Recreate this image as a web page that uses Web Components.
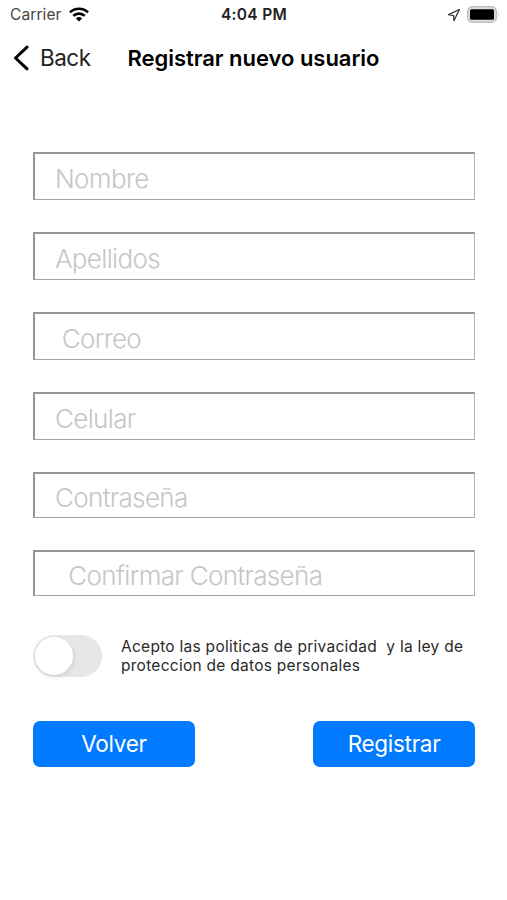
<!DOCTYPE html>
<html lang="es">
<head>
    <meta charset="utf-8">
    <title>Registrar nuevo usuario</title>
    <style>
        body {
            margin: 0;
            background: #fff;
            color: #111;
            font-family: Inter, "Liberation Sans", sans-serif;
        }
    </style>
</head>
<body>
    <register-screen></register-screen>

    <script>
        (function (window) {
            'use strict'

            class StatusBar extends HTMLElement {
                constructor() {
                    super();

                    const styles = `
                    <style>
                        :host {
                            display: grid;
                            grid-template-columns: 1fr auto 1fr;
                            align-items: center;
                            height: 29px;
                            padding: 0 9px 0 10px;
                            box-sizing: border-box;
                            font-size: 15.5px;
                            white-space: nowrap;
                        }
                        .left, .right {
                            display: flex;
                            align-items: center;
                        }
                        .left {
                            gap: 7px;
                            color: #444;
                        }
                        .carrier { letter-spacing: .1px; }
                        .time {
                            font-weight: 600;
                            letter-spacing: .3px;
                            color: #222;
                        }
                        .right {
                            justify-content: flex-end;
                            gap: 6px;
                            margin-right: -2px;
                        }
                        svg { display: block; }
                    </style>
                    `;

                    const template = `
                        <div class="left">
                            <span class="carrier">Carrier</span>
                            <svg width="20" height="15" viewBox="0 0 20 15">
                                <g fill="none" stroke="#000" stroke-width="2.7">
                                    <path d="M1 5.4a12.9 12.9 0 0 1 18 0"/>
                                    <path d="M4.3 8.9a8.1 8.1 0 0 1 11.4 0"/>
                                </g>
                                <path d="M6.9 11.4a4.5 4.5 0 0 1 6.2 0L10 14.6z"/>
                            </svg>
                        </div>
                        <span class="time">4:04 PM</span>
                        <div class="right">
                            <svg width="14" height="14" viewBox="0 0 14 14">
                                <path d="M12.4 1.5 1.6 6.7l5 .9.3 5.1z" fill="none" stroke="#333" stroke-width="1.3" stroke-linejoin="round"/>
                            </svg>
                            <svg width="33" height="17" viewBox="0 0 33 17">
                                <rect x=".7" y=".7" width="28.6" height="15.6" rx="4.5" fill="#ddd" stroke="#b0b0b0" stroke-width="1.1"/>
                                <rect x="3" y="3.3" width="24" height="10.4" rx="1.5"/>
                                <path d="M31 6.3q1.6 2 0 4z" fill="#aaa"/>
                            </svg>
                        </div>
                    `;

                    this.attachShadow({ mode: 'open' }).innerHTML = styles + template;
                }
            }

            class NavBar extends HTMLElement {
                constructor() {
                    super();

                    const styles = `
                    <style>
                        :host {
                            display: flex;
                            align-items: center;
                            height: 57px;
                            padding-left: 13px;
                            font-size: 22.5px;
                            white-space: nowrap;
                        }
                        svg { display: block; }
                        .back {
                            width: 87.5px;
                            padding-left: 11px;
                            letter-spacing: -.5px;
                            color: #222;
                        }
                        .title {
                            font-size: 22px;
                            font-weight: 600;
                            letter-spacing: -.03px;
                            color: #000;
                        }
                    </style>
                    `;

                    const template = `
                        <svg width="16" height="26" viewBox="0 0 16 26">
                            <path d="M14 2.2 2.5 13 14 23.8" fill="none" stroke="#000" stroke-width="3" stroke-linecap="round" stroke-linejoin="round"/>
                        </svg>
                        <span class="back">Back</span>
                        <span class="title"><slot></slot></span>
                    `;

                    this.attachShadow({ mode: 'open' }).innerHTML = styles + template;
                }
            }

            class FormField extends HTMLElement {
                constructor() {
                    super();

                    const styles = `
                    <style>
                        :host {
                            display: flex;
                            align-items: center;
                            height: 48px;
                            box-sizing: border-box;
                            border-style: solid;
                            border-width: 2px 1.5px 1.5px 2px;
                            border-color: #959595 #b2b2b2 #a4a4a4 #959595;
                            padding: 4px 0 0 20px;
                            font-size: 26px;
                            font-weight: 300;
                            letter-spacing: -.65px;
                            color: #c6c6c6;
                            white-space: nowrap;
                        }
                        :host([short]) {
                            height: 46px;
                            padding-top: 3px;
                        }
                    </style>
                    `;

                    this.attachShadow({ mode: 'open' }).innerHTML = styles + '<slot></slot>';
                }
            }

            class ToggleSwitch extends HTMLElement {
                constructor() {
                    super();

                    const styles = `
                    <style>
                        :host {
                            display: flex;
                            flex: none;
                            width: 69px;
                            height: 42px;
                            padding: 2px;
                            box-sizing: border-box;
                            border-radius: 21px;
                            background: #e7e7e9;
                        }
                        .knob {
                            width: 38px;
                            height: 38px;
                            border-radius: 50%;
                            background: #fff;
                            box-shadow: 1px 2px 5px rgba(0, 0, 0, .1);
                        }
                    </style>
                    `;

                    this.attachShadow({ mode: 'open' }).innerHTML = styles + '<div class="knob"></div>';
                }
            }

            class ActionButton extends HTMLElement {
                constructor() {
                    super();

                    const styles = `
                    <style>
                        :host {
                            display: flex;
                            align-items: center;
                            justify-content: center;
                            width: 162px;
                            height: 46px;
                            box-sizing: border-box;
                            padding-bottom: 1px;
                            border-radius: 7px;
                            background: #007aff;
                            color: #fff;
                            font-size: 22.5px;
                            letter-spacing: -.3px;
                        }
                    </style>
                    `;

                    this.attachShadow({ mode: 'open' }).innerHTML = styles + '<slot></slot>';
                }
            }

            class RegisterScreen extends HTMLElement {
                constructor() {
                    super();

                    const styles = `
                    <style>
                        :host {
                            display: block;
                            height: 900px;
                            overflow: hidden;
                        }
                        .form {
                            display: flex;
                            flex-direction: column;
                            gap: 32.1px;
                            padding: 66px 32px 0 33px;
                        }
                        .terms {
                            display: flex;
                            align-items: center;
                            gap: 19px;
                            margin-top: 6px;
                        }
                        .terms p {
                            margin: 0;
                            font-size: 15.5px;
                            line-height: 19px;
                            letter-spacing: .27px;
                            color: #2a2a2a;
                            white-space: pre;
                        }
                        .actions {
                            display: flex;
                            justify-content: space-between;
                            margin-top: 12px;
                        }
                    </style>
                    `;

                    // some labels carry leading spaces, kept with white-space: pre
                    const template = `
                        <status-bar></status-bar>
                        <nav-bar>Registrar nuevo usuario</nav-bar>
                        <div class="form">
                            <form-field>Nombre</form-field>
                            <form-field>Apellidos</form-field>
                            <form-field style="white-space: pre"> Correo</form-field>
                            <form-field>Celular</form-field>
                            <form-field short>Contraseña</form-field>
                            <form-field short style="white-space: pre">  Confirmar Contraseña</form-field>
                            <div class="terms">
                                <toggle-switch></toggle-switch>
                                <p>Acepto las politicas de privacidad  y la ley de\nproteccion de datos personales</p>
                            </div>
                            <div class="actions">
                                <action-button>Volver</action-button>
                                <action-button>Registrar</action-button>
                            </div>
                        </div>
                    `;

                    this.attachShadow({ mode: 'open' }).innerHTML = styles + template;
                }
            }

            window.customElements.define('status-bar', StatusBar);
            window.customElements.define('nav-bar', NavBar);
            window.customElements.define('form-field', FormField);
            window.customElements.define('toggle-switch', ToggleSwitch);
            window.customElements.define('action-button', ActionButton);
            window.customElements.define('register-screen', RegisterScreen);
        })(window);
    </script>
</body>
</html>
